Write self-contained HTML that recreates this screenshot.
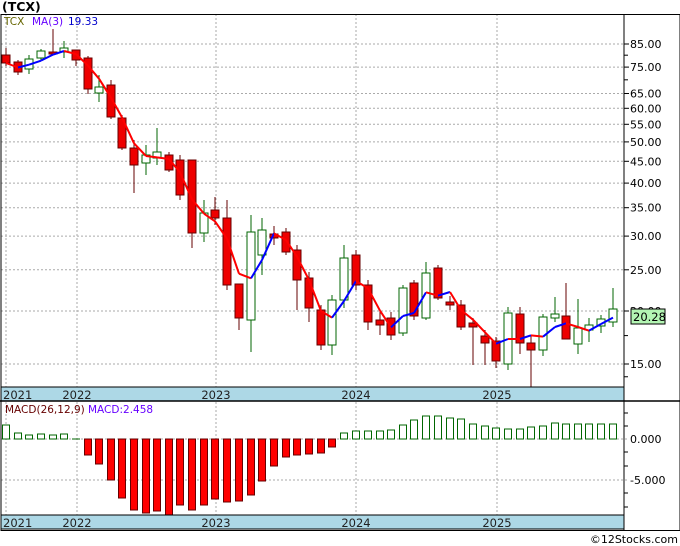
<!DOCTYPE html>
<html><head><meta charset="utf-8"><style>
html,body{margin:0;padding:0;background:#fff;width:680px;height:546px;overflow:hidden}
svg{display:block;font-family:"DejaVu Sans","Liberation Sans",sans-serif}
</style></head><body>
<svg id="s" width="680" height="546" xmlns="http://www.w3.org/2000/svg"></svg>
<script>
const s=document.getElementById('s');let h='';
const Y=p=>44+(Math.log(85)-Math.log(p))*184.5;
h+='<text x="2" y="11" font-size="12.5" font-weight="bold" fill="#000">(TCX)</text>';
const prices=[85,75,65,60,55,50,45,40,35,30,25,20,15];
const minor=[80,70,17.5,14];
minor.forEach(p=>{h+=`<line x1="624" x2="628" y1="${Y(p)}" y2="${Y(p)}" stroke="#000"/>`});
prices.forEach(p=>{const y=Y(p).toFixed(1);h+=`<line x1="1" x2="624" y1="${y}" y2="${y}" stroke="#aaa" stroke-dasharray="2,2"/><line x1="624" x2="629" y1="${y}" y2="${y}" stroke="#000"/><text x="630" y="${+y+4}" font-size="11" fill="#000">${p.toFixed(2)}</text>`});
const yrs=[[6,'2021'],[77,'2022'],[216,'2023'],[356,'2024'],[497,'2025']];
yrs.forEach(([x])=>{h+=`<line x1="${x}" x2="${x}" y1="14" y2="530" stroke="#aaa" stroke-dasharray="2,2"/>`});
[[439,'0.000'],[480,'-5.000']].forEach(([y,t])=>{h+=`<line x1="1" x2="629" y1="${y}" y2="${y}" stroke="#aaa" stroke-dasharray="2,2"/><text x="630" y="${y+4}" font-size="11">${t}</text>`});
[413,426,452,466,493,507].forEach(y=>{h+=`<line x1="624" x2="628" y1="${y}" y2="${y}" stroke="#000"/>`});
const C=[[6,55,63,48,66],[18,62,72,60,75],[29,69,59,55,74],[41,58,51,49,60],[53,52,54,29,54],[64,52,48,41,58],[76,50,60,50,66],[88,58,89,56,94],[99,93,87,75,102],[111,85,117,80,119],[122,118,148,115,150],[134,148,165,140,193],[146,163,155,145,175],[157,158,152,128,165],[169,155,170,152,172],[180,160,195,155,200],[192,160,233,160,248],[204,233,213,200,242],[215,210,218,197,225],[227,218,285,200,290],[239,284,318,284,330],[251,320,232,215,352],[262,255,230,218,275],[274,234,238,226,245],[286,232,252,228,255],[297,250,280,245,310],[309,278,308,272,322],[321,310,345,305,350],[332,345,300,295,355],[344,300,258,245,308],[356,255,285,250,290],[368,285,322,280,330],[380,320,325,312,335],[391,318,335,312,340],[403,333,288,285,336],[414,283,316,280,320],[426,318,273,262,320],[438,268,298,265,300],[450,302,305,296,310],[461,305,327,300,330],[473,323,327,318,365],[485,336,343,330,365],[496,341,361,337,368],[508,364,313,307,370],[520,314,343,307,354],[531,343,350,336,387],[543,350,317,314,356],[555,318,314,297,322],[566,316,339,283,339],[578,344,328,299,354],[589,330,325,318,342],[601,326,319,315,333],[613,322,309,288,327]];
C.forEach(([x,o,c,hi,lo])=>{const up=c<o,t=Math.min(o,c),b=Math.max(o,c);
h+=`<line x1="${x}" x2="${x}" y1="${hi}" y2="${lo}" stroke="${up?'#060':'#600'}"/>`;
h+=`<rect x="${x-4}" y="${t}" width="8" height="${Math.max(b-t,2)}" fill="${up?'#fff':'#e00'}" stroke="${up?'#060':'#600'}"/>`});
let ma=[];for(let i=0;i<C.length;i++){const a=C.slice(Math.max(0,i-2),i+1);ma.push(a.reduce((s,v)=>s+v[2],0)/a.length)}
for(let i=1;i<C.length;i++){const col=ma[i]<ma[i-1]?'#00f':'#f00';h+=`<line x1="${C[i-1][0]}" y1="${ma[i-1]}" x2="${C[i][0]}" y2="${ma[i]}" stroke="${col}" stroke-width="2"/>`}
h+='<text x="4" y="25" font-size="10.5" fill="#660">TCX</text><text x="32" y="25" font-size="10.5" fill="#60f">MA(3)</text><text x="68" y="25" font-size="10.5" fill="#00c">19.33</text>';
h+='<rect x="631" y="309" width="34" height="15" fill="#b3f5b3" stroke="#000"/><text x="633" y="321" font-size="11.5">20.28</text>';
const M=[14,6,4,5,4,5,0,-16,-25,-41,-59,-71,-74,-72,-76,-66,-71,-66,-60,-63,-62,-56,-42,-27,-18,-16,-15,-14,-8,6,8,8,8,9,14,19,23,23,21,20,15,13,11,10,10,12,13,16,15,15,15,15,15];
M.forEach((v,i)=>{const x=C[i][0];if(v>0)h+=`<rect x="${x-3.5}" y="${439-v}" width="7" height="${v}" fill="#fff" stroke="#060"/>`;else if(v<0)h+=`<rect x="${x-3.5}" y="439" width="7" height="${-v}" fill="#f00" stroke="#600"/>`;else h+=`<line x1="${x-4}" x2="${x+4}" y1="439" y2="439" stroke="#060"/>`});
h+='<text x="5" y="413" font-size="10.5" fill="#600">MACD(26,12,9)</text><text x="88" y="413" font-size="10.5" fill="#60f">MACD:2.458</text>';
[387,515].forEach(y=>{h+=`<rect x="1" y="${y}" width="623" height="14" fill="#add8e6" stroke="#000"/>`;yrs.forEach(([x,t])=>{h+=`<text x="${x}" y="${y+12}" font-size="11.5" text-anchor="${x==6?'start':'middle'}" fill="#222" ${x==6?'dx="-3"':''}>${t}</text>`})});
h+='<rect x="1" y="14.5" width="679" height="516" fill="none" stroke="#000"/><line x1="624" x2="624" y1="14" y2="530" stroke="#000"/><line x1="0" x2="680" y1="401" y2="401" stroke="#000" stroke-width="1.5"/>';
h+='<text x="678" y="543" font-size="11" text-anchor="end">©12Stocks.com</text>';
s.innerHTML=h;
</script>
</body></html>
